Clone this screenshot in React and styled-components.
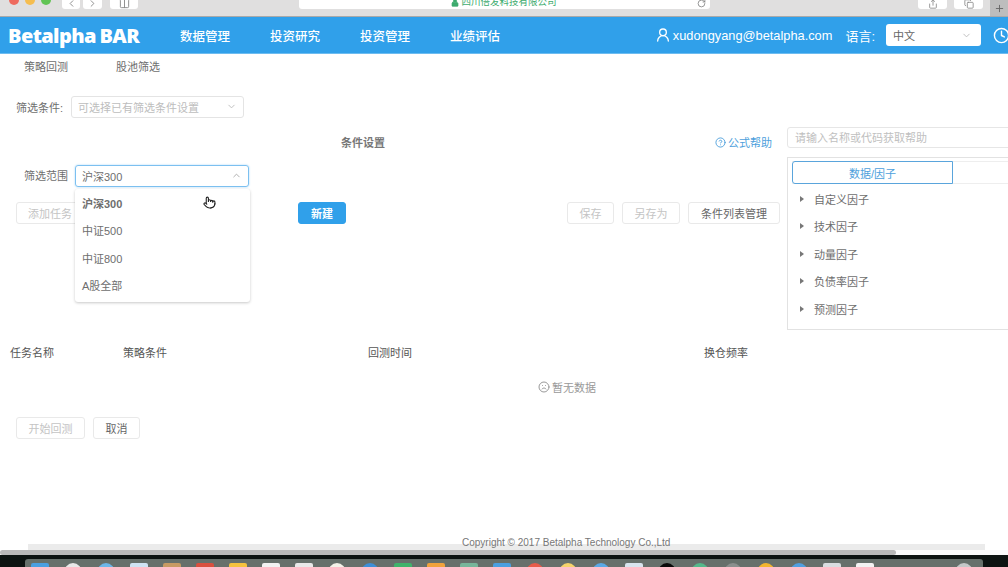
import React from "react";
import styled, { createGlobalStyle } from "styled-components";
import { ChevronDown, ChevronLeft, ChevronRight, ChevronUp, CircleHelp, Clock, Columns2, Frown, Plus, Pointer, RotateCw, Share, Copy, UserRound, Lock } from "lucide-react";

const Global = createGlobalStyle`
  html, body { margin: 0; padding: 0; background: #fff; }
  * { box-sizing: border-box; }
  body { font-family: "Liberation Sans", "Noto Sans CJK SC", sans-serif; font-size: 11px; color: #6e6e6e; }
`;

const Page = styled.div`
  width: 1008px;
  height: 567px;
  overflow: hidden;
  display: flex;
  flex-direction: column;
`;

/* browser chrome, cut off at the top of the shot */
const Chrome = styled.div`
  height: 17px;
  flex: none;
  background: #e0dfdf;
  border-bottom: 1px solid #a9a9a9;
  display: flex;
  align-items: flex-end;
  overflow: hidden;
`;

const Lights = styled.div`
  display: flex;
  gap: 6px;
  margin: 0 0 11px 9px;
  width: 53px;
`;

const Light = styled.span`
  width: 10px;
  height: 10px;
  flex: none;
  border-radius: 50%;
  background: ${(p) => p.$color};
`;

const ChromeBtn = styled.div`
  width: ${(p) => p.$w}px;
  height: 20px;
  flex: none;
  margin: 0 ${(p) => p.$gap || 0}px 7px 0;
  background: #fff;
  border-radius: 3px;
  color: #888;
  display: flex;
  align-items: flex-end;
  justify-content: center;
`;

const UrlBar = styled.div`
  width: 411px;
  height: 20px;
  flex: none;
  margin: 0 208px 7px 161px;
  background: #fff;
  border-radius: 3px;
  display: flex;
  align-items: flex-end;
  justify-content: center;
  position: relative;
  color: #3dab6e;
  font-size: 9.5px;
  line-height: 10px;
  gap: 2px;
  padding: 0 1px 2px 0;
`;

const Reload = styled.span`
  position: absolute;
  right: 4px;
  bottom: 1px;
  color: #777;
  display: flex;
`;

const PlusTab = styled.div`
  flex: 1;
  height: 16px;
  margin-left: 7px;
  background: #bdbdbd;
  color: #666;
  display: flex;
  align-items: center;
  justify-content: center;
`;

const Header = styled.header`
  height: 37px;
  flex: none;
  background: #30a0ea;
  border-bottom: 1px solid #6dbcf0;
  display: flex;
  align-items: center;
  padding-left: 8px;
  color: #fff;
`;

const Logo = styled.div`
  width: 172px;
  font-family: "Open Sans", sans-serif;
  font-size: 20px;
  font-weight: 800;
  letter-spacing: -0.6px;
  word-spacing: -1px;
  white-space: nowrap;
`;

const Nav = styled.nav`
  display: flex;
  gap: 40px;
  font-size: 12.5px;
  font-weight: 500;
`;

const HeaderRight = styled.div`
  margin-left: auto;
  display: flex;
  align-items: center;
  font-size: 13px;
`;

const Email = styled.span`
  margin: 0 13px 0 2px;
  font-size: 12.8px;
`;

const LangSelect = styled.div`
  width: 95px;
  height: 22px;
  margin: 0 12px 0 11px;
  background: #fff;
  border-radius: 3px;
  color: #666;
  font-size: 11px;
  display: flex;
  align-items: center;
  justify-content: space-between;
  padding: 0 9px 0 7px;
`;

const ClockWrap = styled.span`
  width: 15px;
  overflow: hidden;
  display: flex;
`;

const Tabs = styled.div`
  height: 25px;
  flex: none;
  display: flex;
  align-items: center;
  gap: 48px;
  padding: 0 0 2px 24px;
`;

const FilterRow = styled.div`
  display: flex;
  align-items: center;
  gap: 8px;
  margin: 17px 0 9px 16px;
  flex: none;
`;

const Select = styled.div`
  width: ${(p) => p.$w}px;
  height: 22px;
  flex: none;
  border: 1px solid ${(p) => (p.$open ? "#7cc0f0" : "#e4e4e4")};
  box-shadow: ${(p) => (p.$open ? "0 0 2px #9fd2f5" : "none")};
  border-radius: 3px;
  color: ${(p) => (p.$muted ? "#bdbdbd" : "#6e6e6e")};
  display: flex;
  align-items: center;
  justify-content: space-between;
  padding: 0 6px 1px;
  position: relative;
`;

const Workspace = styled.div`
  display: flex;
  flex: none;
  height: 233px;
`;

const LeftCol = styled.div`
  width: 787px;
  flex: none;
`;

const TitleRow = styled.div`
  height: 38px;
  display: grid;
  grid-template-columns: 1fr auto;
  align-items: center;
  padding: 0 15px 8px 341px;
  font-weight: 700;
  color: #777;
`;

const Help = styled.a`
  display: flex;
  align-items: center;
  gap: 2px;
  color: #4d9fdc;
  font-weight: 400;
`;

const RangeRow = styled.div`
  display: flex;
  align-items: center;
  gap: 7px;
  padding-left: 24px;
`;

const RangeLabel = styled.span`
  padding-bottom: 2px;
`;

const Dropdown = styled.ul`
  position: absolute;
  left: -1px;
  top: 23px;
  width: 175px;
  height: 113px;
  margin: 0;
  padding: 0;
  list-style: none;
  background: #fff;
  border-radius: 3px;
  box-shadow: 0 1px 3px rgba(0, 0, 0, 0.22);
  z-index: 2;
`;

const Option = styled.li`
  height: 27.5px;
  padding-left: 7px;
  display: flex;
  align-items: center;
  font-weight: ${(p) => (p.$active ? 700 : 400)};
`;

const Hand = styled.span`
  position: absolute;
  left: 128px;
  top: 7px;
  display: flex;
  color: #222;
`;

const ActionRow = styled.div`
  display: flex;
  margin: 15px 0 0 16px;
  width: 764px;
`;

const Btn = styled.button`
  width: ${(p) => p.$w}px;
  height: 22px;
  flex: none;
  margin-left: ${(p) => p.$left || 0}px;
  padding: 0;
  font: inherit;
  background: ${(p) => (p.$primary ? "#30a0ea" : "#fff")};
  color: ${(p) => (p.$primary ? "#fff" : p.$off ? "#c4c4c4" : "#666")};
  font-weight: ${(p) => (p.$primary ? 700 : 400)};
  border: 1px solid ${(p) => (p.$primary ? "#30a0ea" : "#e9e9e9")};
  border-radius: 3px;
`;

const TableHead = styled.div`
  display: grid;
  grid-template-columns: 113px 245px 336px 1fr;
  margin-top: 122px;
  padding-left: 10px;
  color: #555;
  line-height: 14px;
`;

const RightCol = styled.aside`
  width: 240px;
  flex: none;
`;

const Search = styled.div`
  height: 21px;
  padding: 0 0 1px 7px;
  border: 1px solid #e6e6e6;
  border-radius: 3px;
  color: #c0c0c0;
  display: flex;
  align-items: center;
`;

const Panel = styled.div`
  height: 173px;
  margin-top: 9px;
  padding: 3px 0 0 4px;
  border: 1px solid #e2e2e2;
`;

const PanelTabs = styled.div`
  display: flex;
  height: 23px;
  border-bottom: 1px solid #eee;
  border-top: 1px solid #eee;
`;

const PanelTab = styled.div`
  width: 161px;
  margin: -1px 0;
  border: 1px solid #5aa5dc;
  border-radius: 3px 0 0 3px;
  color: #4d9fdc;
  display: flex;
  align-items: center;
  justify-content: center;
`;

const Tree = styled.ul`
  margin: 1px 0 0;
  padding: 0;
  list-style: none;
`;

const TreeItem = styled.li`
  height: 27.5px;
  padding-left: 8px;
  display: flex;
  align-items: center;
  gap: 10px;
  &::before {
    content: "";
    border-left: 4px solid #777;
    border-top: 3px solid transparent;
    border-bottom: 3px solid transparent;
  }
`;

const Empty = styled.div`
  height: 57px;
  flex: none;
  display: flex;
  align-items: center;
  justify-content: center;
  gap: 2px;
  width: 1134px;
  padding-bottom: 3px;
  color: #999;
`;

const FootBtns = styled.div`
  display: flex;
  gap: 8px;
  padding-left: 16px;
  flex: none;
`;

const Footer = styled.footer`
  margin-top: 98px;
  height: 7px;
  flex: none;
  line-height: 12px;
  font-size: 10px;
  color: #777;
  padding-left: 462px;
  white-space: nowrap;
  position: relative;
  z-index: 1;
`;

const Ghost = styled.div`
  height: 6px;
  flex: none;
  margin: 0 23px 0 28px;
  background: #ebebeb;
`;

const ScrollTrack = styled.div`
  height: 5px;
  flex: none;
  background: #fafafa;
`;

const ScrollThumb = styled.div`
  width: 896px;
  height: 100%;
  background: #b9b9b9;
  border-radius: 3px;
`;

const Desktop = styled.div`
  flex: 1;
  background: #0c1311;
  padding: 4px 25px 0;
`;

const Dock = styled.div`
  height: 20px;
  background: #66706b;
  border-radius: 3px 3px 0 0;
  display: flex;
  align-items: flex-start;
  padding: 4px 0 0 6px;
  gap: 15px;
`;

const DockIcon = styled.span`
  width: 18px;
  height: 20px;
  flex: none;
  background: ${(p) => p.$color};
  border-radius: ${(p) => (p.$round ? "50%" : "2px")};
`;

const dockIcons = [
  ["#4a9fe0"], ["#e8e8e8", 1], ["#6db6e8", 1], ["#cfe3f3"], ["#c79a63"], ["#d9503f"], ["#f5c23e"],
  ["#f2f2f2"], ["#e9e9e9"], ["#f3f1e8", 1], ["#3c8fd8", 1], ["#3fb36b"], ["#f0a23c"], ["#77b59a"],
  ["#4a9fe0"], ["#e65b4a", 1], ["#f6d36b", 1], ["#5aa9e6", 1], ["#d8e4ee"], ["#0a0a0a", 1], ["#54b98b", 1],
  ["#8a8f8d", 1], ["#f3b52f", 1], ["#4f9fe0", 1], ["#d9dde0"], ["#f2f2f2"], ["transparent"], ["transparent"], ["#c4c8c8", 1],
];

const ranges = ["沪深300", "中证500", "中证800", "A股全部"];
const factors = ["自定义因子", "技术因子", "动量因子", "负债率因子", "预测因子"];

export default function App() {
  return (
    <Page>
      <Global />
      <Chrome>
        <Lights>
          <Light $color="#ee6a5e" />
          <Light $color="#f5bd4f" />
          <Light $color="#61c454" />
        </Lights>
        <ChromeBtn $w={18} $gap={3}><ChevronLeft size={11} /></ChromeBtn>
        <ChromeBtn $w={19} $gap={8}><ChevronRight size={11} /></ChromeBtn>
        <ChromeBtn $w={28}><Columns2 size={11} /></ChromeBtn>
        <UrlBar>
          <Lock size={8} fill="#3dab6e" />
          四川倍发科技有限公司
          <Reload><RotateCw size={9} /></Reload>
        </UrlBar>
        <ChromeBtn $w={29} $gap={7}><Share size={10} /></ChromeBtn>
        <ChromeBtn $w={29}><Copy size={10} /></ChromeBtn>
        <PlusTab><Plus size={11} /></PlusTab>
      </Chrome>

      <Header>
        <Logo>Betalpha BAR</Logo>
        <Nav>
          <span>数据管理</span>
          <span>投资研究</span>
          <span>投资管理</span>
          <span>业绩评估</span>
        </Nav>
        <HeaderRight>
          <UserRound size={16} />
          <Email>xudongyang@betalpha.com</Email>
          <span>语言:</span>
          <LangSelect>
            中文
            <ChevronDown size={11} color="#bbb" />
          </LangSelect>
          <ClockWrap><Clock size={17} style={{ flex: "none" }} /></ClockWrap>
        </HeaderRight>
      </Header>

      <Tabs>
        <span>策略回测</span>
        <span>股池筛选</span>
      </Tabs>

      <FilterRow>
        <span>筛选条件:</span>
        <Select $w={173} $muted>
          可选择已有筛选条件设置
          <ChevronDown size={11} color="#bbb" />
        </Select>
      </FilterRow>

      <Workspace>
        <LeftCol>
          <TitleRow>
            <span>条件设置</span>
            <Help><CircleHelp size={11} />公式帮助</Help>
          </TitleRow>
          <RangeRow>
            <RangeLabel>筛选范围</RangeLabel>
            <Select $w={174} $open>
              沪深300
              <ChevronUp size={11} color="#aaa" />
              <Dropdown>
                {ranges.map((r, i) => (
                  <Option key={r} $active={i === 0}>{r}</Option>
                ))}
                <Hand><Pointer size={13} /></Hand>
              </Dropdown>
            </Select>
          </RangeRow>
          <ActionRow>
            <Btn $w={68} $off>添加任务</Btn>
            <Btn $w={48} $left={214} $primary>新建</Btn>
            <Btn $w={47} $left={221} $off>保存</Btn>
            <Btn $w={58} $left={8} $off>另存为</Btn>
            <Btn $w={92} $left={8}>条件列表管理</Btn>
          </ActionRow>
          <TableHead>
            <span>任务名称</span>
            <span>策略条件</span>
            <span>回测时间</span>
            <span>换仓频率</span>
          </TableHead>
        </LeftCol>
        <RightCol>
          <Search>请输入名称或代码获取帮助</Search>
          <Panel>
            <PanelTabs>
              <PanelTab>数据/因子</PanelTab>
            </PanelTabs>
            <Tree>
              {factors.map((f) => (
                <TreeItem key={f}>{f}</TreeItem>
              ))}
            </Tree>
          </Panel>
        </RightCol>
      </Workspace>

      <Empty><Frown size={12} />暂无数据</Empty>

      <FootBtns>
        <Btn $w={69} $off>开始回测</Btn>
        <Btn $w={47}>取消</Btn>
      </FootBtns>

      <Footer>Copyright © 2017 Betalpha Technology Co.,Ltd</Footer>
      <Ghost />
      <ScrollTrack><ScrollThumb /></ScrollTrack>
      <Desktop>
        <Dock>
          {dockIcons.map(([color, round], i) => (
            <DockIcon key={i} $color={color} $round={round} />
          ))}
        </Dock>
      </Desktop>
    </Page>
  );
}
